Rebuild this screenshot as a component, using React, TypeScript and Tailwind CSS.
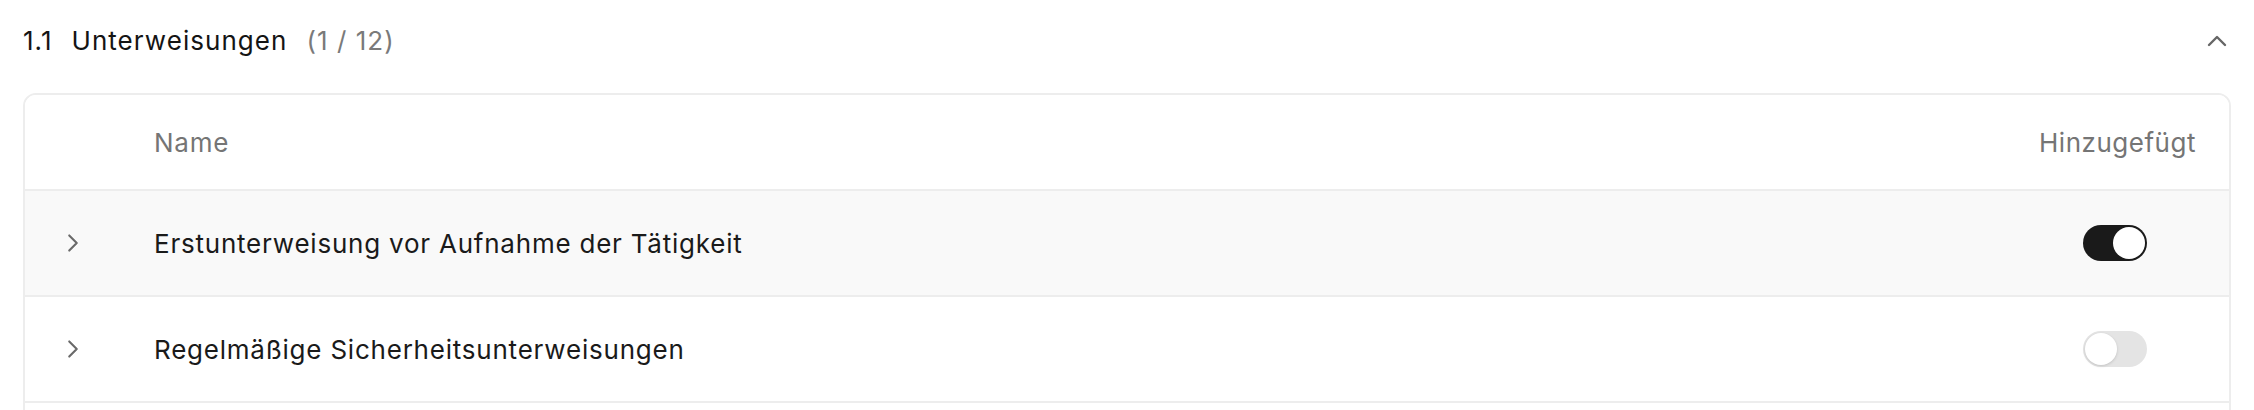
import React from "react";
import { ChevronUp, ChevronRight } from "lucide-react";

function Toggle({ on }: { on: boolean }) {
  return on ? (
    <div className="flex h-[36px] w-[64px] items-center justify-end rounded-full bg-[#1a1a1a] p-[2px]">
      <div className="h-[32px] w-[32px] rounded-full bg-white" />
    </div>
  ) : (
    <div className="flex h-[36px] w-[64px] items-center justify-start rounded-full bg-[#e4e4e4] p-[2px]">
      <div className="h-[32px] w-[32px] rounded-full bg-white shadow-[0_1px_3px_rgba(0,0,0,0.15)]" />
    </div>
  );
}

function Row({ name, on, hover }: { name: string; on: boolean; hover?: boolean }) {
  return (
    <div
      className={
        "flex h-[106px] items-center border-b-2 border-[#ededed] " +
        (hover ? "bg-[#f9f9f9]" : "bg-white")
      }
    >
      <div className="flex w-[129px] shrink-0 items-center pl-[33px]">
        <ChevronRight size={30} strokeWidth={1.7} color="#6b6b6b" />
      </div>
      <div className="flex-1 text-[26px] tracking-[0.03em] text-[#1a1a1a]">{name}</div>
      <div className="flex shrink-0 pr-[33px]">
        <div className="flex w-[162px] justify-center">
          <Toggle on={on} />
        </div>
      </div>
    </div>
  );
}

export default function App() {
  return (
    <div
      className="min-h-[410px] bg-white px-[23px]"
      style={{ fontFamily: "Inter, 'Noto Sans', sans-serif" }}
    >
      <div className="flex h-[81px] items-center justify-between">
        <div className="flex items-center text-[26px] tracking-[0.04em] text-[#141414]">
          <span>1.1</span>
          <span className="ml-[19px]">Unterweisungen</span>
          <span className="ml-[19px] text-[#7a7a7a]">(1 / 12)</span>
        </div>
        <ChevronUp size={32} strokeWidth={1.8} color="#666666" className="mr-[-2px]" />
      </div>
      <div className="mt-[12px] overflow-hidden rounded-[13px] border-2 border-[#ededed]">
        <div className="flex h-[96px] items-center border-b-2 border-[#ededed] bg-white">
          <div className="w-[129px] shrink-0" />
          <div className="flex-1 text-[26px] tracking-[0.03em] text-[#757575]">Name</div>
          <div className="flex shrink-0 pr-[33px]">
            <div className="flex w-[162px] justify-end text-[26px] tracking-[0.02em] text-[#757575]">
              Hinzugefügt
            </div>
          </div>
        </div>
        <Row name="Erstunterweisung vor Aufnahme der Tätigkeit" on={true} hover />
        <Row name="Regelmäßige Sicherheitsunterweisungen" on={false} />
        <div className="h-[106px] bg-white" />
      </div>
    </div>
  );
}
